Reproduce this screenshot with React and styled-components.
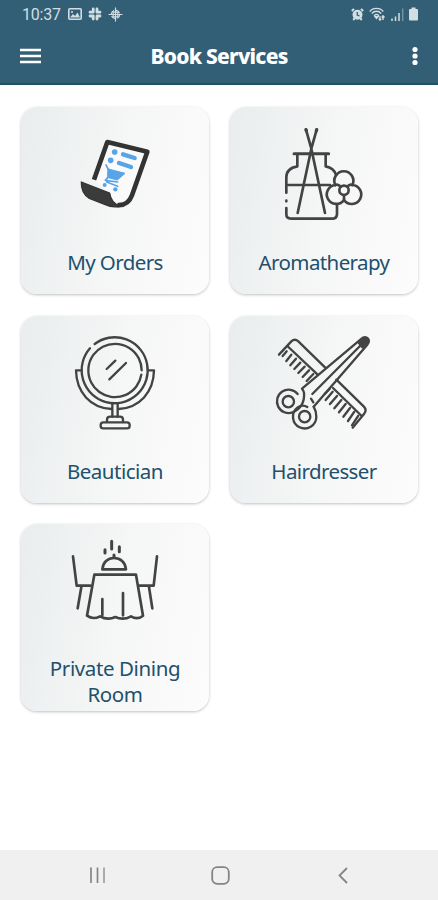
import React from 'react'
import styled, { createGlobalStyle } from 'styled-components'

const GlobalStyle = createGlobalStyle`
  * {
    box-sizing: border-box;
  }

  body {
    margin: 0;
    background: #fff;
    font-family: "Noto Sans", "Open Sans", sans-serif;
  }
`

const Screen = styled.div`
  display: flex;
  flex-direction: column;
  width: 100%;
  height: 100vh;
  overflow: hidden;
`

const Header = styled.header`
  height: 85px;
  background: #325f75;
  border-bottom: 2px solid #1f5168;
  color: #fff;
`

const StatusBar = styled.div`
  display: flex;
  align-items: center;
  justify-content: space-between;
  height: 28px;
  padding: 0 20px 0 22px;
  color: #d3dee3;
`

const StatusGroup = styled.div`
  display: flex;
  align-items: center;
  gap: ${({ $gap }) => $gap}px;
`

const Clock = styled.span`
  width: 39px;
  margin-right: 1px;
  padding-top: 1px;
  font-family: Roboto, sans-serif;
  font-size: 16px;
  line-height: 28px;
  letter-spacing: -0.2px;
`

const Toolbar = styled.div`
  display: grid;
  grid-template-columns: 40px 1fr 40px;
  align-items: center;
  height: 55px;
  padding: 0 10px;
`

const Title = styled.h1`
  margin: 0;
  font-size: 21px;
  font-weight: 800;
  line-height: 28px;
  letter-spacing: -0.75px;
  text-align: center;
  white-space: nowrap;
`

const IconButton = styled.button`
  display: flex;
  align-items: center;
  justify-content: ${({ $align = 'center' }) => $align};
  height: 40px;
  padding: 0;
  border: 0;
  background: none;
  color: inherit;
`

const Services = styled.main`
  display: grid;
  flex: 1;
  grid-template-columns: 188px 188px;
  grid-auto-rows: 187px;
  gap: 21.5px 21px;
  padding: 22px 0 0 21px;
`

const Card = styled.section`
  display: flex;
  flex-direction: column;
  align-items: center;
  padding-top: 6px;
  border-radius: 16px;
  background: linear-gradient(100deg, #e9edee 0%, #f5f6f6 50%, #fdfcfc 100%);
  box-shadow: 0 1px 3px rgba(0, 0, 0, 0.25);
`

const Picture = styled.svg`
  flex: none;
  width: 120px;
  height: 120px;
  fill: none;
  stroke: #434344;
  stroke-width: ${({ $stroke = 7.5 }) => $stroke};
  stroke-linecap: round;
  stroke-linejoin: round;
`

const Label = styled.div`
  display: flex;
  align-items: center;
  justify-content: center;
  width: 150px;
  height: 60px;
  margin-top: ${({ $drop = -1 }) => $drop}px;
  color: #21506c;
  font-size: 20.5px;
  line-height: 26px;
  letter-spacing: ${({ $tracking = 0 }) => $tracking}px;
  text-align: center;
`

const NavBar = styled.nav`
  display: grid;
  grid-template-columns: repeat(3, 122.5px);
  align-items: center;
  justify-content: center;
  height: 50px;
  padding: 1px 0 0 2px;
  background: #f0f0f0;
  color: #858585;
`

const OrdersIcon = () => (
  <Picture viewBox="-30 -36 360 360">
    <path d="M127 50 L248 80 L202 213 Q190 244 158 240 Q140 237 135 206 L88 164 Z" fill="#fafafa" stroke="none" />
    <path d="M87 164 L127 51 L247 80 L201 211 Q189 243 157 240" stroke="#333" strokeWidth="14" strokeLinecap="butt" strokeLinejoin="round" />
    <path d="M49 171 L134 204 Q138 235 166 243 Q145 250 119 238 L73 220 Q48 205 49 171 Z" fill="#3b3b3b" stroke="#333" strokeWidth="4" />
    <g stroke="#57a4e8">
      <path d="M174 88 L209 99 M162 114 L198 126" strokeWidth="13" />
      <circle cx="149" cy="81" r="8.5" fill="#57a4e8" stroke="none" />
      <circle cx="137" cy="106" r="8.5" fill="#57a4e8" stroke="none" />
      <path d="M130 132 L180 145 L157 165 L130 158 Z" fill="#57a4e8" strokeWidth="3" />
      <path d="M123 120 L130 133 L129 157 L121 166 L158 171 M125 171 L158 184" strokeWidth="5" />
      <circle cx="119" cy="180" r="6" fill="#57a4e8" stroke="none" />
      <circle cx="151" cy="193" r="6.5" fill="#57a4e8" stroke="none" />
    </g>
  </Picture>
)

const AromaIcon = () => (
  <Picture viewBox="-16 -6 360 360" $stroke={8}>
    <path d="M74 116 H178" strokeWidth="9" />
    <path d="M84 120 V154 C62 158 51 168 51 187 V233 M51 257 V259 M51 279 V298 Q51 311 65 311 H188 Q202 311 203 298 V268" />
    <path d="M169 120 V154 C187 157 196 166 200 180" />
    <path d="M56 210 H182" />
    <path d="M110 44 L126 101 L167 294 M142 44 L126 101 L85 294" />
    <path d="M110 44 L111 47 M142 44 L141 47" strokeWidth="10" />
    <path d="M198 210 A28.5 28.5 0 1 1 249 210 A28.5 28.5 0 1 1 224 255 A28.5 28.5 0 1 1 198 210" />
    <circle cx="224" cy="226" r="14" />
    <path d="M198 210 Q206 206 214 215 M249 210 Q241 206 234 215 M224 255 V241" />
  </Picture>
)

const MirrorIcon = () => (
  <Picture viewBox="-30 -9 360 360" $stroke={7}>
    <path d="M89 57 A99 99 0 1 1 75 70" />
    <path d="M229 149 A80 80 0 1 1 230 136" />
    <path d="M125 132 L151 107 M133 163 L183 114" />
    <path d="M50 136 H33 C34 201 76 249 140 252 M249 136 H267 C266 201 224 249 160 252" />
    <path d="M142 238 V275 M158 238 V275" />
    <path d="M126 291 V284 Q126 275 136 275 H165 Q174 275 174 284 V291" />
    <rect x="107" y="292" width="87" height="18" rx="8" />
  </Picture>
)

const ScissorsIcon = () => (
  <Picture viewBox="-3 -9 360 360" $stroke={7}>
    <path d="M42 89 L79 49 Q89 40 100 49 L180 127 M214 164 L296 244 Q307 255 297 267 L263 308" />
    <path d="M67 63 L158 149 M204 189 L290 273" />
    <path d="M65 79 L53 93 M79 89 L64 108 M93 101 L76 121 M106 113 L88 132 M119 125 L100 144 M132 136 L113 156 M145 147 L125 168" />
    <path d="M194 192 L179 207 M203 200 L182 225 M216 213 L195 237 M229 225 L208 250 M242 237 L222 262 M255 249 L235 275 M268 260 L249 288 M280 272 L261 301" />
    <path d="M98 207 A35 35 0 1 0 83 262 C104 254 120 234 117 203 Q116 197 111 191 L287 43 Q300 32 309 41 Q315 48 307 59 L146 245" />
    <path d="M138 221 L145 232 M142 207 L291 57" />
    <path d="M282 54 L299 40 Q309 38 307 51 L292 67 Z" fill="#434344" />
    <circle cx="70" cy="230" r="17" />
    <path d="M146 245 Q154 258 154 276 A35 35 0 1 1 97 248 Q112 237 127 246" />
    <circle cx="119" cy="275" r="17" />
  </Picture>
)

const DiningIcon = () => (
  <Picture viewBox="-15 0 360 360" $stroke={8}>
    <path d="M39 79 L50 167 H91 M64 171 L53 235" />
    <path d="M291 79 L281 167 H239 M267 171 L277 235" />
    <path d="M103 134 H228 L249 257 Q232 271 213 259 Q189 272 166 261 Q143 272 120 259 Q99 270 81 257 Z" />
    <path d="M127 207 V256 M189 189 V256" />
    <path d="M127 118 H198 C196 96 181 84 162 84 C143 84 129 97 127 118 Z" />
    <path d="M162 75 V82 M155 34 V57 M135 59 V69 M178 50 V65" strokeWidth="9" />
  </Picture>
)

const services = [
  { name: 'My Orders', icon: OrdersIcon, tracking: -0.6 },
  { name: 'Aromatherapy', icon: AromaIcon, tracking: -0.6 },
  { name: 'Beautician', icon: MirrorIcon, tracking: -0.5 },
  { name: 'Hairdresser', icon: ScissorsIcon, tracking: -0.6 },
  { name: 'Private Dining Room', icon: DiningIcon, tracking: -0.4, drop: 1 }
]

const PhoneStatus = () => (
  <StatusBar>
    <StatusGroup $gap={6}>
      <Clock>10:37</Clock>
      <svg width="14" height="12" viewBox="0 0 14 12">
        <rect x="0.8" y="0.8" width="12.4" height="10.4" rx="1" fill="none" stroke="currentColor" strokeWidth="1.6" />
        <path d="M2 9.5 L5 6 L7 8 L9.5 4.5 L12 9.5 Z" fill="currentColor" />
        <circle cx="4" cy="4" r="1" fill="currentColor" />
      </svg>
      <svg width="14" height="14" viewBox="0 0 14 14" stroke="currentColor" strokeWidth="2.8" strokeLinecap="round">
        <path d="M5.2 2 V5.2 M2 5.2 H5.2 M9 2 V5.2 M9 5.2 H12 M2 9 H5.2 M5.2 9 V12 M9 9 H12 M9 9 V12" />
      </svg>
      <svg width="15" height="15" viewBox="0 0 15 15" fill="none" stroke="currentColor" strokeWidth="1.2">
        <circle cx="7.5" cy="7.5" r="4.2" strokeDasharray="4.6 2" />
        <path d="M7.5 0.5 V14.5 M0.5 7.5 H14.5 M5.2 5.2 H9.8 V9.8 H5.2 Z" />
      </svg>
    </StatusGroup>
    <StatusGroup $gap={5}>
      <svg width="13" height="13" viewBox="0 0 13 13">
        <circle cx="6.5" cy="6.7" r="5" fill="currentColor" />
        <path d="M0.8 3 L3 0.9 M12.2 3 L10 0.9 M2.2 12 L3.5 10.5 M10.8 12 L9.5 10.5" stroke="currentColor" strokeWidth="2" />
        <path d="M6.3 4 V7 L8.5 8" stroke="#325f75" strokeWidth="1.3" fill="none" />
      </svg>
      <svg width="17" height="15" viewBox="0 0 17 15" fill="none" stroke="currentColor" strokeWidth="1.4">
        <path d="M0.7 4.5 C4 0.3 11 0.3 14.3 4.5 M2.8 6.5 C5.4 3.5 9.6 3.5 12.2 6.5 M5 8.7 Q7.5 6.4 10 8.7" />
        <path d="M6.2 9.8 L7.5 11.5 L9 9.8 Z" fill="currentColor" />
        <path d="M11 9.2 V13 M14 13 V9 M9.8 11.6 L11 13.2 L12.2 11.6 M12.8 10.5 L14 8.9 L15.5 10.5" />
      </svg>
      <svg width="13" height="13" viewBox="0 0 13 13" stroke="currentColor" strokeWidth="1.5">
        <path d="M1 10.5 V13 M4.5 8.5 V13 M8 5 V13" />
        <path d="M11.7 0.5 V13" opacity="0.4" />
      </svg>
      <svg width="9" height="14" viewBox="0 0 9 14" fill="currentColor">
        <path d="M2.5 0.5 H6.5 V2 H8 Q9 2 9 3 V12.5 Q9 13.5 8 13.5 H1 Q0 13.5 0 12.5 V3 Q0 2 1 2 H2.5 Z" />
      </svg>
    </StatusGroup>
  </StatusBar>
)

export default () => (
  <Screen>
    <GlobalStyle />
    <Header>
      <PhoneStatus />
      <Toolbar>
        <IconButton aria-label="Menu">
          <svg width="21" height="16" viewBox="0 0 21 16" stroke="currentColor" strokeWidth="2.5">
            <path d="M0 2 H21 M0 8 H21 M0 14 H21" />
          </svg>
        </IconButton>
        <Title>Book Services</Title>
        <IconButton aria-label="More" $align="flex-end">
          <svg width="26" height="20" viewBox="0 0 26 20" fill="currentColor">
            <circle cx="13" cy="3.5" r="2.6" />
            <circle cx="13" cy="10" r="2.6" />
            <circle cx="13" cy="16.5" r="2.6" />
          </svg>
        </IconButton>
      </Toolbar>
    </Header>

    <Services>
      {services.map(({ name, icon: Icon, tracking, drop }) => (
        <Card key={name}>
          <Icon />
          <Label $tracking={tracking} $drop={drop}>{name}</Label>
        </Card>
      ))}
    </Services>

    <NavBar>
      <IconButton aria-label="Recents">
        <svg width="17" height="17" viewBox="0 0 17 17" stroke="currentColor" strokeWidth="1.7">
          <path d="M2 0.5 V16 M8.5 0.5 V16" />
          <path d="M15 0.5 V16" opacity="0.75" />
        </svg>
      </IconButton>
      <IconButton aria-label="Home">
        <svg width="19" height="19" viewBox="0 0 19 19" fill="none" stroke="currentColor" strokeWidth="1.8">
          <rect x="1.2" y="1.2" width="16.6" height="16.6" rx="5" />
        </svg>
      </IconButton>
      <IconButton aria-label="Back">
        <svg width="10" height="17" viewBox="0 0 10 17" fill="none" stroke="currentColor" strokeWidth="1.8">
          <path d="M9 1 L1.5 8.5 L9 16" />
        </svg>
      </IconButton>
    </NavBar>
  </Screen>
)
